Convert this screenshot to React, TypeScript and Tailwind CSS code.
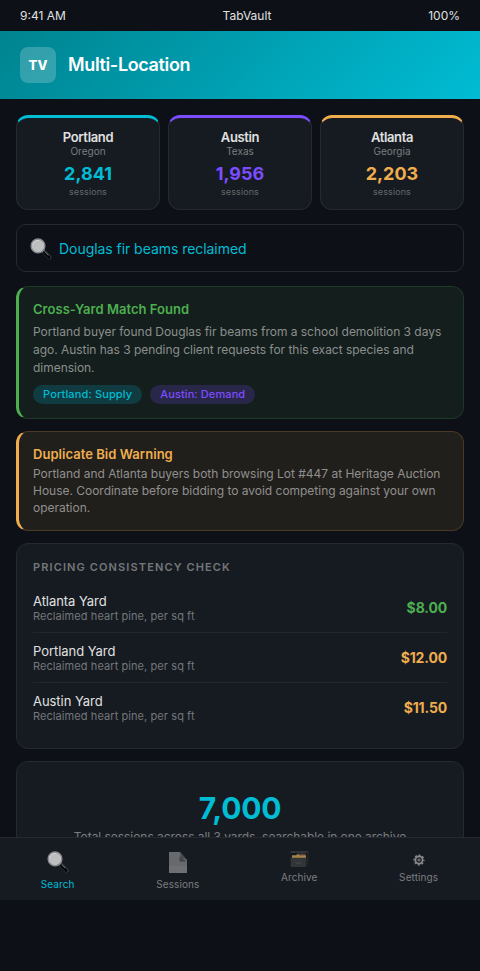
import { type ReactNode } from 'react';
import clsx from 'clsx';

const yards = [
  { city: 'Portland', state: 'Oregon', sessions: '2,841', border: 'border-t-[#00bcd4]', text: 'text-[#00bcd4]' },
  { city: 'Austin', state: 'Texas', sessions: '1,956', border: 'border-t-[#7c4dff]', text: 'text-[#7c4dff]' },
  { city: 'Atlanta', state: 'Georgia', sessions: '2,203', border: 'border-t-[#f0ad4e]', text: 'text-[#f0ad4e]' },
];

const prices = [
  { yard: 'Atlanta Yard', item: 'Reclaimed heart pine, per sq ft', price: '$8.00', color: 'text-[#4caf50]' },
  { yard: 'Portland Yard', item: 'Reclaimed heart pine, per sq ft', price: '$12.00', color: 'text-[#f0ad4e]' },
  { yard: 'Austin Yard', item: 'Reclaimed heart pine, per sq ft', price: '$11.50', color: 'text-[#f0ad4e]' },
];

function MagnifierIcon({ className }: { className?: string }) {
  return (
    <svg className={className} viewBox="0 0 22 22" fill="none">
      <path d="M12 12l3 3" stroke="#8b8f93" strokeWidth="2" />
      <path d="M14.2 14.2l5.2 5.2" stroke="#4c5054" strokeWidth="4" strokeLinecap="round" />
      <path d="M14.4 14.6l4.8 4.8" stroke="#060709" strokeWidth="2.9" strokeLinecap="round" />
      <path d="M15 13.8l3 3" stroke="#85898c" strokeWidth="0.9" strokeLinecap="round" />
      <circle cx="8" cy="7.9" r="6.9" fill="#bdbebf" stroke="#888c90" strokeWidth="1.3" />
      <path d="M3 6.2a5.4 5.4 0 0 1 5.4-3.8" stroke="#d6d7d8" strokeWidth="0.9" strokeLinecap="round" />
    </svg>
  );
}

function PageIcon() {
  return (
    <svg className="w-[18px] h-[21px]" viewBox="0 0 18 21">
      <path d="M0 0h11l7 8v13H0z" fill="#67696d" />
      <path d="M0 14h18v7H0z" fill="#6d6f73" />
      <path d="M10.5 4.5L17.5 9.5H10.5z" fill="#3f4246" />
      <path d="M11 0l7 8c-2-1.6-4.5-1.9-6.700-1.600C11.700 4.500 11.700 2 11 0z" fill="#45484c" />
    </svg>
  );
}

function CabinetIcon() {
  return (
    <svg className="w-[19px] h-[17px]" viewBox="0 0 19 17">
      <path d="M.5 0h18v13.5L16 16H.8z" fill="#222528" />
      <path d="M.5 0h18L17 2H1z" fill="#303337" />
      <path d="M1 2h16v4H1z" fill="#15181b" />
      <path d="M7 2.6h4v1.5H7z" fill="#2c4454" />
      <path d="M11 2.6h4.5v1.8H11z" fill="#79372e" />
      <path d="M2 4.2h4l1-.6h2l.8.6H16V7H2z" fill="#a38349" />
      <path d="M.6 6.700h15.600l-.5 9.300H.8z" fill="#333639" />
      <path d="M16.200 6.500L18.500 4v9l-2.800 2.900z" fill="#212427" />
      <path d="M6 11v1.300h4.600V11" stroke="#4c4f52" strokeWidth="0.7" fill="none" />
    </svg>
  );
}

function GearIcon() {
  return (
    <svg className="w-3 h-3" viewBox="0 0 12 12" fill="none" stroke="#88898b">
      <circle cx="6" cy="6" r="3.6" strokeWidth="1.8" />
      <circle cx="6" cy="6" r="4.9" strokeWidth="1.3" strokeDasharray="2.1 1.748" strokeDashoffset="1.05" />
      <circle cx="6" cy="6" r="1.1" strokeWidth="1" />
    </svg>
  );
}

function NavItem({ label, active, children }: { label: string; active?: boolean; children: ReactNode }) {
  return (
    <div
      className={clsx(
        'flex flex-col items-center text-[10px] leading-3 tracking-[0.1px]',
        active ? 'text-[#00bcd4]' : 'text-[#7b7d80]',
      )}
    >
      {children}
      <span>{label}</span>
    </div>
  );
}

export default function App() {
  return (
    <div className="h-[971px] bg-[#0d1017] text-[#e0e0e0] font-[Inter,sans-serif]">
      <div className="h-[900px] flex flex-col overflow-hidden">
        <div className="shrink-0 flex justify-between px-5 py-2 text-xs leading-[15px]">
          <span>9:41 AM</span>
          <span>TabVault</span>
          <span>100%</span>
        </div>

        <header className="shrink-0 flex items-center gap-3 px-5 py-4 bg-[linear-gradient(135deg,#00838f,#00bcd4)] text-white">
          <div className="size-9 rounded-lg bg-white/20 flex items-center justify-center pt-0.5 text-[13px] font-extrabold">TV</div>
          <h1 className="text-lg leading-[22px] font-semibold tracking-[-0.36px]">Multi-Location</h1>
        </header>

        <main className="flex-1 min-h-0 overflow-hidden px-4 pt-4">
          <div className="grid grid-cols-3 gap-2 mb-3.5">
            {yards.map((y) => (
              <div
                key={y.city}
                className={clsx('rounded-xl border border-t-3 border-[#262930] bg-[#161b21] py-3 text-center', y.border)}
              >
                <div className="text-[13px] leading-[15px] font-semibold tracking-[-0.35px]">{y.city}</div>
                <div className="text-[10px] leading-3 text-[#7b7d80]">{y.state}</div>
                <div className={clsx('mt-1.5 text-lg leading-[22px] font-bold', y.text)}>{y.sessions}</div>
                <div className="mt-px text-[9px] leading-[11px] tracking-[0.1px] text-[#64666a]">sessions</div>
              </div>
            ))}
          </div>

          <div className="h-12 mb-3.5 rounded-[10px] border border-[#262930] flex items-center px-[13px]">
            <MagnifierIcon className="size-[22px] mt-0.5" />
            <span className="ml-[7px] pt-0.5 text-sm tracking-[-0.05px] text-[#00bcd4]">Douglas fir beams reclaimed</span>
          </div>

          <section className="mb-3 rounded-xl border border-l-3 border-[#1d3928] border-l-[#4caf50] bg-[#141e1c] p-3.5">
            <h2 className="text-[13px] leading-4 font-semibold tracking-[0.03px] text-[#4caf50]">Cross-Yard Match Found</h2>
            <p className="mt-1.5 text-xs leading-[18px] tracking-[-0.03px] text-[#8b8f8e]">
              Portland buyer found Douglas fir beams from a school demolition 3 days ago. Austin has 3 pending client
              requests for this exact species and dimension.
            </p>
            <div className="mt-2 flex gap-2 text-[11px] leading-[13px] font-medium">
              <span className="rounded-[10px] bg-[#103b40] px-2.5 py-[3px] tracking-[0.14px] text-[#00bcd4]">Portland: Supply</span>
              <span className="rounded-[10px] bg-[#292749] px-2.5 py-[3px] tracking-[0.1px] text-[#7c4dff]">Austin: Demand</span>
            </div>
          </section>

          <section className="mb-3 rounded-xl border border-l-3 border-[#4a3a24] border-l-[#f0ad4e] bg-[#211f1c] p-3.5">
            <h2 className="text-[13px] leading-4 font-semibold tracking-[0.04px] text-[#f0ad4e]">Duplicate Bid Warning</h2>
            <p className="mt-1 text-xs leading-[1.4] tracking-[-0.02px] text-[#908f8e]">
              Portland and Atlanta buyers both browsing Lot #447 at Heritage Auction House. Coordinate before bidding to
              avoid competing against your own operation.
            </p>
          </section>

          <section className="mb-3 rounded-xl border border-[#262930] bg-[#161b21] p-4">
            <h2 className="mb-[9px] pt-px text-[11px] leading-[13px] font-semibold tracking-[1.12px] text-[#74777a] uppercase">
              Pricing Consistency Check
            </h2>
            {prices.map((p) => (
              <div key={p.yard} className="flex items-center justify-between border-b border-[#23272d] py-2.5 last:border-b-0">
                <div>
                  <div className="text-[13px] leading-[17px] tracking-[-0.05px]">{p.yard}</div>
                  <div className="text-[11px] leading-3 tracking-[0.08px] text-[#74777a]">{p.item}</div>
                </div>
                <div className={clsx('pt-px text-sm font-bold tracking-[-0.15px]', p.color)}>{p.price}</div>
              </div>
            ))}
          </section>

          <section className="rounded-xl border border-[#262930] bg-[#161b21] px-4 pt-7 pb-7 text-center">
            <div className="text-[30px] leading-[36px] font-bold tracking-[-0.2px] text-[#00bcd4]">7,000</div>
            <div className="mt-[3px] text-xs leading-[15px] tracking-[-0.05px] text-[#7b7d80]">
              Total sessions across all 3 yards, searchable in one archive
            </div>
          </section>
        </main>

        <nav className="shrink-0 h-[63px] flex items-start justify-around border-t border-[#262930] bg-[#161b21] pr-px">
          <NavItem label="Search" active>
            <MagnifierIcon className="size-[22px] mt-[13px] mb-[5px]" />
          </NavItem>
          <NavItem label="Sessions">
            <div className="mt-3.5 mb-[5px]">
              <PageIcon />
            </div>
          </NavItem>
          <NavItem label="Archive">
            <div className="mt-[13px] mb-[3px]">
              <CabinetIcon />
            </div>
          </NavItem>
          <NavItem label="Settings">
            <div className="mt-4 mb-[5px]">
              <GearIcon />
            </div>
          </NavItem>
        </nav>
      </div>
    </div>
  );
}
